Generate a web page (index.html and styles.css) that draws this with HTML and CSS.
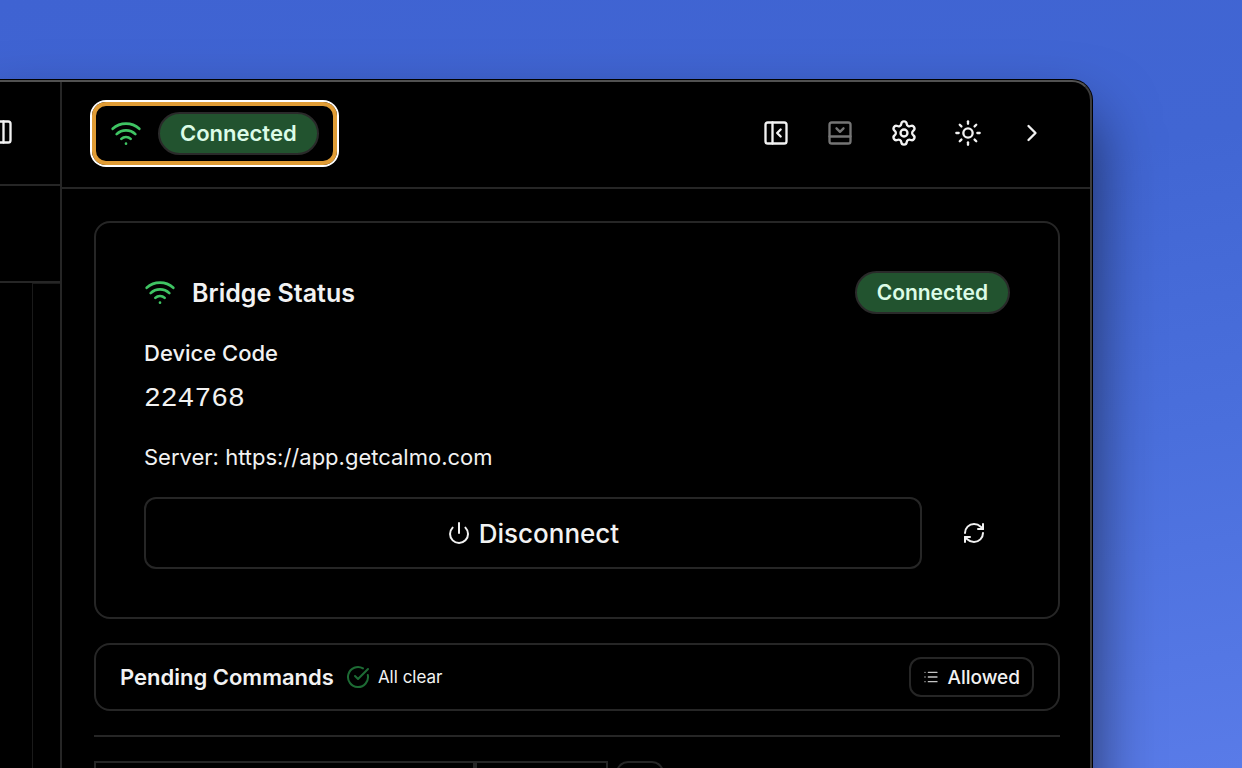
FILE: index.html
```html
<!DOCTYPE html>
<html lang="en">
<head>
  <meta charset="UTF-8" />
  <title>Bridge Status</title>
  <meta name="viewport" content="width=device-width, initial-scale=1.0" />
  <link rel="stylesheet" href="styles.css">
</head>
<body>
  <div class="window">
    <aside class="sidebar">
      <div class="sidebar-header">
        <button class="plain-btn" aria-label="Toggle sidebar">
          <svg class="icon" viewBox="0 0 24 24"><rect x="3" y="3" width="18" height="18" rx="2"/><path d="M15 3v18"/></svg>
        </button>
      </div>
      <div class="sidebar-sub"></div>
      <div class="sidebar-body"><div class="sidebar-pane"></div></div>
    </aside>

    <main class="panel">
      <header class="panel-header">
        <div class="highlight">
          <svg class="icon icon-wifi" viewBox="0 0 24 24"><path d="M12 20h.01"/><path d="M2 8.82a15 15 0 0 1 20 0"/><path d="M5 12.859a10 10 0 0 1 14 0"/><path d="M8.5 16.429a5 5 0 0 1 7 0"/></svg>
          <span class="badge">Connected</span>
        </div>
        <nav class="toolbar">
          <button class="tool-btn" aria-label="Collapse left panel">
            <svg class="icon" viewBox="0 0 24 24"><rect x="3" y="3" width="18" height="18" rx="2"/><path d="M9 3v18"/><path d="m16 15-3-3 3-3"/></svg>
          </button>
          <button class="tool-btn" aria-label="Collapse bottom panel" disabled>
            <svg class="icon" viewBox="0 0 24 24"><rect x="3" y="3" width="18" height="18" rx="2"/><path d="M3 15h18"/><path d="m15 8-3 3-3-3"/></svg>
          </button>
          <button class="tool-btn" aria-label="Settings">
            <svg class="icon" viewBox="0 0 24 24"><path d="M9.671 4.136a2.34 2.34 0 0 1 4.659 0 2.34 2.34 0 0 0 3.319 1.915 2.34 2.34 0 0 1 2.33 4.033 2.34 2.34 0 0 0 0 3.831 2.34 2.34 0 0 1-2.33 4.033 2.34 2.34 0 0 0-3.319 1.915 2.34 2.34 0 0 1-4.659 0 2.34 2.34 0 0 0-3.32-1.915 2.34 2.34 0 0 1-2.33-4.033 2.34 2.34 0 0 0 0-3.831A2.34 2.34 0 0 1 6.35 6.051a2.34 2.34 0 0 0 3.319-1.915"/><circle cx="12" cy="12" r="3"/></svg>
          </button>
          <button class="tool-btn" aria-label="Theme">
            <svg class="icon" viewBox="0 0 24 24"><circle cx="12" cy="12" r="4"/><path d="M12 2v2"/><path d="M12 20v2"/><path d="m4.93 4.93 1.41 1.41"/><path d="m17.66 17.66 1.41 1.41"/><path d="M2 12h2"/><path d="M20 12h2"/><path d="m6.34 17.66-1.41 1.41"/><path d="m19.07 4.93-1.41 1.41"/></svg>
          </button>
          <button class="tool-btn" aria-label="Next">
            <svg class="icon" viewBox="0 0 24 24"><path d="m9 18 6-6-6-6"/></svg>
          </button>
        </nav>
      </header>

      <div class="content">
        <section class="card">
          <div class="card-header">
            <svg class="icon icon-wifi" viewBox="0 0 24 24"><path d="M12 20h.01"/><path d="M2 8.82a15 15 0 0 1 20 0"/><path d="M5 12.859a10 10 0 0 1 14 0"/><path d="M8.5 16.429a5 5 0 0 1 7 0"/></svg>
            <h2>Bridge Status</h2>
            <span class="badge badge-card">Connected</span>
          </div>
          <div class="device">
            <div class="device-label">Device Code</div>
            <div class="device-code">224768</div>
          </div>
          <div class="server">Server: https://app.getcalmo.com</div>
          <div class="actions">
            <button class="disconnect-btn">
              <svg class="icon icon-md" viewBox="0 0 24 24"><path d="M12 2v10"/><path d="M18.4 6.6a9 9 0 1 1-12.77.04"/></svg>
              Disconnect
            </button>
            <button class="refresh-btn" aria-label="Refresh">
              <svg class="icon icon-md" viewBox="0 0 24 24"><path d="M3 12a9 9 0 0 1 9-9 9.75 9.75 0 0 1 6.74 2.74L21 8"/><path d="M21 3v5h-5"/><path d="M21 12a9 9 0 0 1-9 9 9.75 9.75 0 0 1-6.74-2.74L3 16"/><path d="M8 16H3v5"/></svg>
            </button>
          </div>
        </section>

        <section class="pending">
          <h3>Pending Commands</h3>
          <span class="all-clear">
            <svg class="icon icon-md icon-check" viewBox="0 0 24 24"><path d="M21.801 10A10 10 0 1 1 17 3.335"/><path d="m9 11 3 3L22 4"/></svg>
            All clear
          </span>
          <button class="allowed-btn">
            <svg class="icon icon-list" viewBox="0 0 24 24"><path d="M3 5h.01"/><path d="M3 12h.01"/><path d="M3 19h.01"/><path d="M8 5h13"/><path d="M8 12h13"/><path d="M8 19h13"/></svg>
            Allowed
          </button>
        </section>

        <hr>

        <div class="filters">
          <div class="filter filter-wide"></div>
          <div class="filter filter-narrow"></div>
          <div class="filter filter-add"></div>
        </div>
      </div>
    </main>
  </div>
</body>
</html>
```

FILE: styles.css
```css
* {
  box-sizing: border-box;
}
body {
  margin: 0;
  height: 100vh;
  overflow: hidden;
  display: flex;
  padding: 79px 149px 0 0;
  font-family: Inter, sans-serif;
  color: #f2f2f2;
  background: linear-gradient(170deg, #3f63d2 0%, #4166d3 35%, #4a6fdc 65%, #597be8 100%);
}
h2, h3 {
  margin: 0;
  font-weight: 600;
}
button {
  font-family: inherit;
  color: inherit;
  background: none;
  border: 0;
  padding: 0;
  cursor: pointer;
}
.icon {
  display: block;
  flex: none;
  width: 28px;
  height: 28px;
  fill: none;
  stroke: currentColor;
  stroke-width: 2;
  stroke-linecap: round;
  stroke-linejoin: round;
}
.icon-wifi {
  width: 32px;
  height: 32px;
  margin-bottom: 1px;
  color: #3fc463;
}
.icon-md {
  width: 24px;
  height: 24px;
}

/* window frame, runs off the left and bottom edges */
.window {
  flex: 1;
  display: flex;
  margin: 1px 1px 0 -14px;
  background: #000;
  border-top: 2px solid #515151;
  border-right: 2px solid #3c3c3c;
  border-radius: 0 20px 0 0;
  box-shadow: 0 0 0 1px #000, 0 36px 64px rgba(0, 0, 0, 0.6);
  min-height: 900px;
}

.sidebar {
  flex: none;
  width: 76px;
  display: flex;
  flex-direction: column;
  border-right: 2px solid #262626;
}
.sidebar-header {
  height: 104px;
  display: flex;
  align-items: center;
  padding-bottom: 2px;
  border-bottom: 2px solid #262626;
}
.sidebar-sub {
  height: 97px;
  border-bottom: 2px solid #262626;
}
.sidebar-body {
  flex: 1;
  display: flex;
  padding-left: 46px;
}
.sidebar-pane {
  flex: 1;
  border-left: 1px solid #1a1a1a;
  border-top: 1px solid #1a1a1a;
}

.panel {
  flex: 1;
  min-width: 0;
}
.panel-header {
  display: flex;
  align-items: flex-start;
  justify-content: space-between;
  padding: 18px 26px 20px 28px;
  border-bottom: 2px solid #262626;
}
.highlight {
  display: flex;
  align-items: center;
  gap: 16px;
  margin: 2px;
  padding: 6px 14px;
  border: 4px solid #e09c35;
  border-radius: 14px;
  box-shadow: 0 0 0 2px #fff;
}
.badge {
  padding: 0 20px;
  border: 2px solid #2a2a2a;
  border-radius: 22px;
  background: #22532f;
  color: #dcfce7;
  font-size: 22px;
  font-weight: 600;
  line-height: 39px;
}
.badge-card {
  margin-left: auto;
  font-size: 21px;
}
.toolbar {
  display: flex;
}
.tool-btn {
  width: 64px;
  height: 66px;
  display: flex;
  align-items: center;
  justify-content: center;
}
.tool-btn:disabled {
  color: #757575;
}

.content {
  padding: 32px 30px 32px 32px;
}
.card {
  padding: 48px;
  border: 2px solid #262626;
  border-radius: 16px;
}
.card-header {
  display: flex;
  align-items: center;
  gap: 16px;
}
.card-header h2 {
  font-size: 25px;
}
.device {
  margin-top: 24px;
}
.device-label {
  font-size: 22px;
  font-weight: 500;
  line-height: 30px;
}
.device-code {
  margin-top: 8px;
  font-family: "Liberation Mono", monospace;
  font-size: 28px;
  line-height: 45px;
}
.server {
  margin-top: 20px;
  font-size: 22px;
  line-height: 32px;
}
.actions {
  display: flex;
  gap: 16px;
  margin-top: 24px;
}
.disconnect-btn {
  flex: 1;
  height: 72px;
  display: flex;
  align-items: center;
  justify-content: center;
  gap: 8px;
  border: 2px solid #262626;
  border-radius: 12px;
  font-size: 26px;
  font-weight: 500;
}
.refresh-btn {
  width: 72px;
  height: 72px;
  display: flex;
  align-items: center;
  justify-content: center;
}

.pending {
  display: flex;
  align-items: center;
  gap: 12px;
  margin-top: 24px;
  padding: 12px 24px;
  border: 2px solid #262626;
  border-radius: 16px;
}
.pending h3 {
  font-size: 22px;
}
.all-clear {
  display: flex;
  align-items: center;
  gap: 8px;
  font-size: 17px;
}
.icon-check {
  color: #1d6b34;
}
.allowed-btn {
  height: 40px;
  display: flex;
  align-items: center;
  gap: 8px;
  margin-left: auto;
  padding: 0 12px;
  border: 2px solid #262626;
  border-radius: 12px;
  font-size: 19px;
  font-weight: 500;
}
.icon-list {
  width: 16px;
  height: 16px;
  color: #c4c4c4;
}

hr {
  margin: 24px 0;
  border: 0;
  border-top: 2px solid #262626;
}
.filters {
  display: flex;
}
.filter {
  height: 48px;
  border: 2px solid #262626;
}
.filter-wide {
  width: 381px;
}
.filter-narrow {
  width: 133px;
}
.filter-add {
  width: 48px;
  margin-left: 8px;
  border-radius: 12px;
}
```
